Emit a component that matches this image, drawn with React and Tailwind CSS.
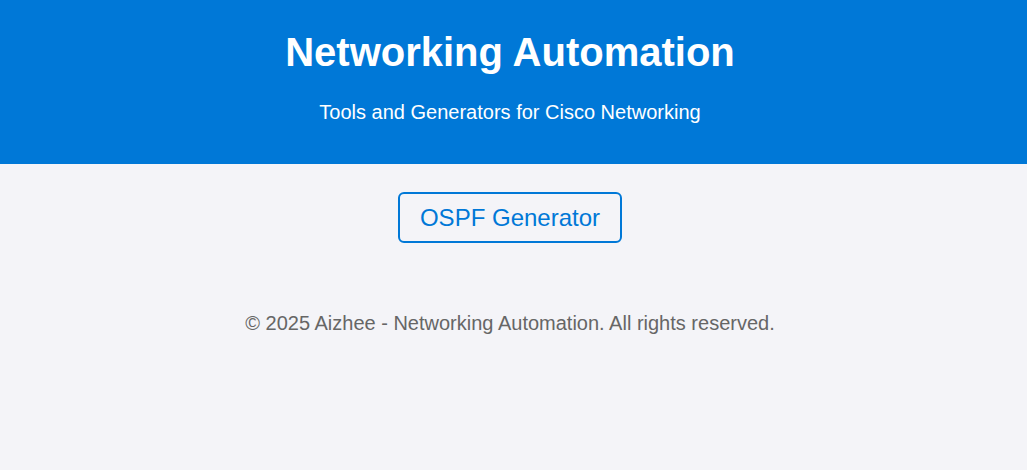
export default function App() {
  return (
    <div className="min-h-[470px] bg-[#f4f4f8] font-['Liberation_Sans',Arial,sans-serif] text-center">
      <header className="bg-[#0078d7] text-white pt-[29px] pb-[40px] pr-[7px]">
        <h1 className="text-[40px] font-bold leading-[46px]">Networking Automation</h1>
        <p className="mt-[26px] text-[20px] leading-[23px]">Tools and Generators for Cisco Networking</p>
      </header>

      <main className="pt-[28px] pr-[7px] flex justify-center">
        <a
          href="#"
          className="inline-block border-2 border-[#0078d7] rounded-[6px] px-[20px] py-[9px] text-[24px] leading-[29px] text-[#0078d7]"
        >
          OSPF Generator
        </a>
      </main>

      <footer className="mt-[69px] pr-[7px] text-[20px] leading-[23px] text-[#666]">
        © 2025 Aizhee - Networking Automation. All rights reserved.
      </footer>
    </div>
  );
}
